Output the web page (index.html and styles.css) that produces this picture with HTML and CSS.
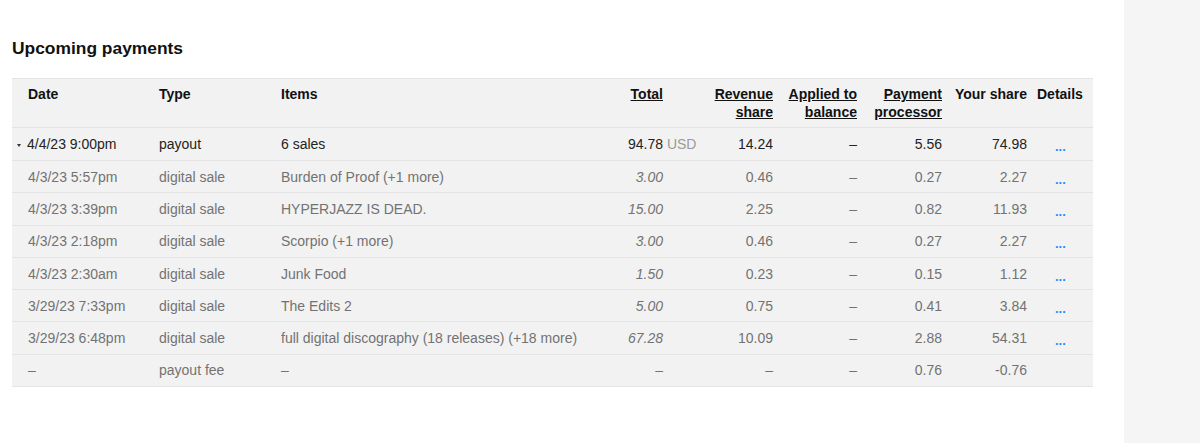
FILE: index.html
```html
<!DOCTYPE html>
<html>
<head>
<meta charset="utf-8">
<link rel="stylesheet" href="styles.css">
</head>
<body>
<div class="page">
  <main class="main">
    <h2 class="title">Upcoming payments</h2>
    <table class="payments">
      <colgroup>
        <col class="c-date"><col class="c-type"><col class="c-items"><col class="c-total"><col class="c-rev"><col class="c-applied"><col class="c-proc"><col class="c-share"><col class="c-details">
      </colgroup>
      <thead>
        <tr>
          <th class="l first">Date</th>
          <th class="l">Type</th>
          <th class="l">Items</th>
          <th class="r"><span class="sort">Total</span></th>
          <th class="r"><span class="sort">Revenue</span><br><span class="sort">share</span></th>
          <th class="r"><span class="sort">Applied to</span><br><span class="sort">balance</span></th>
          <th class="r"><span class="sort">Payment</span><br><span class="sort">processor</span></th>
          <th class="r">Your share</th>
          <th class="l det-h">Details</th>
        </tr>
      </thead>
      <tbody>
        <tr class="payout">
          <td class="l first"><span class="caret"></span>4/4/23 9:00pm</td>
          <td class="l">payout</td>
          <td class="l">6 sales</td>
          <td class="r">94.78<span class="cur">&nbsp;USD</span></td>
          <td class="r">14.24</td>
          <td class="r">–</td>
          <td class="r">5.56</td>
          <td class="r">74.98</td>
          <td class="l det"><span class="dots">...</span></td>
        </tr>
        <tr class="sub">
          <td class="l first">4/3/23 5:57pm</td>
          <td class="l">digital sale</td>
          <td class="l">Burden of Proof (+1 more)</td>
          <td class="r it">3.00</td>
          <td class="r">0.46</td>
          <td class="r">–</td>
          <td class="r">0.27</td>
          <td class="r">2.27</td>
          <td class="l det"><span class="dots">...</span></td>
        </tr>
        <tr class="sub">
          <td class="l first">4/3/23 3:39pm</td>
          <td class="l">digital sale</td>
          <td class="l">HYPERJAZZ IS DEAD.</td>
          <td class="r it">15.00</td>
          <td class="r">2.25</td>
          <td class="r">–</td>
          <td class="r">0.82</td>
          <td class="r">11.93</td>
          <td class="l det"><span class="dots">...</span></td>
        </tr>
        <tr class="sub">
          <td class="l first">4/3/23 2:18pm</td>
          <td class="l">digital sale</td>
          <td class="l">Scorpio (+1 more)</td>
          <td class="r it">3.00</td>
          <td class="r">0.46</td>
          <td class="r">–</td>
          <td class="r">0.27</td>
          <td class="r">2.27</td>
          <td class="l det"><span class="dots">...</span></td>
        </tr>
        <tr class="sub">
          <td class="l first">4/3/23 2:30am</td>
          <td class="l">digital sale</td>
          <td class="l">Junk Food</td>
          <td class="r it">1.50</td>
          <td class="r">0.23</td>
          <td class="r">–</td>
          <td class="r">0.15</td>
          <td class="r">1.12</td>
          <td class="l det"><span class="dots">...</span></td>
        </tr>
        <tr class="sub">
          <td class="l first">3/29/23 7:33pm</td>
          <td class="l">digital sale</td>
          <td class="l">The Edits 2</td>
          <td class="r it">5.00</td>
          <td class="r">0.75</td>
          <td class="r">–</td>
          <td class="r">0.41</td>
          <td class="r">3.84</td>
          <td class="l det"><span class="dots">...</span></td>
        </tr>
        <tr class="sub">
          <td class="l first">3/29/23 6:48pm</td>
          <td class="l">digital sale</td>
          <td class="l">full digital discography (18 releases) (+18 more)</td>
          <td class="r it">67.28</td>
          <td class="r">10.09</td>
          <td class="r">–</td>
          <td class="r">2.88</td>
          <td class="r">54.31</td>
          <td class="l det"><span class="dots">...</span></td>
        </tr>
        <tr class="sub">
          <td class="l first">–</td>
          <td class="l">payout fee</td>
          <td class="l">–</td>
          <td class="r">–</td>
          <td class="r">–</td>
          <td class="r">–</td>
          <td class="r">0.76</td>
          <td class="r">-0.76</td>
          <td class="l det"></td>
        </tr>
      </tbody>
    </table>
  </main>
  <aside class="side"></aside>
</div>
</body>
</html>
```

FILE: styles.css
```css
html, body {
  margin: 0;
  padding: 0;
  background: #ffffff;
}
body {
  font-family: "Liberation Sans", Arial, sans-serif;
  color: #222222;
}
.page {
  display: flex;
  width: 1200px;
  height: 443px;
}
.main {
  width: 1124px;
  padding: 38px 0 0 12px;
  box-sizing: border-box;
}
.side {
  width: 76px;
  background: #f5f5f5;
}
.title {
  margin: 0 0 20px 0;
  font-size: 17.4px;
  line-height: 20px;
  font-weight: bold;
  color: #111111;
}
.payments {
  width: 1081px;
  table-layout: fixed;
  border-collapse: collapse;
  background: #f2f2f2;
  font-size: 14px;
}
.c-date { width: 147px; }
.c-type { width: 122px; }
.c-items { width: 302px; }
.c-total { width: 80px; }
.c-rev { width: 110px; }
.c-applied { width: 84px; }
.c-proc { width: 85px; }
.c-share { width: 85px; }
.c-details { width: 66px; }

.payments th {
  font-weight: bold;
  color: #111111;
  line-height: 18px;
  padding: 6px 0 6px 0;
  vertical-align: top;
  border-top: 1px solid #e3e3e3;
  border-bottom: 1px solid #e3e3e3;
  white-space: nowrap;
}
.payments td {
  line-height: 18px;
  padding: 0;
  border-bottom: 1px solid #e4e4e4;
  white-space: nowrap;
  vertical-align: middle;
}
.payout {
  height: 33px;
}
.sub {
  height: 32.3px;
}
.payout td { color: #222222; }
.l { text-align: left; }
.r { text-align: right; }
.first { padding-left: 16px !important; }
.det-h { padding-left: 10px !important; }
.det { padding-left: 28px !important; }
.sort { text-decoration: underline; }

.sub td { color: #727272; }
.it { font-style: italic; }
.cur {
  display: inline-block;
  width: 0;
  color: #9a9a9a;
  white-space: nowrap;
  text-align: left;
}
.caret {
  display: inline-block;
  width: 0;
  height: 0;
  border-left: 2.5px solid transparent;
  border-right: 2.5px solid transparent;
  border-top: 3.5px solid #333333;
  margin-left: -11px;
  margin-right: 6px;
  vertical-align: 2px;
}
.dots {
  color: #2a8cff;
  font-size: 13px;
  font-weight: bold;
  line-height: 1px;
  vertical-align: -2px;
}
```
